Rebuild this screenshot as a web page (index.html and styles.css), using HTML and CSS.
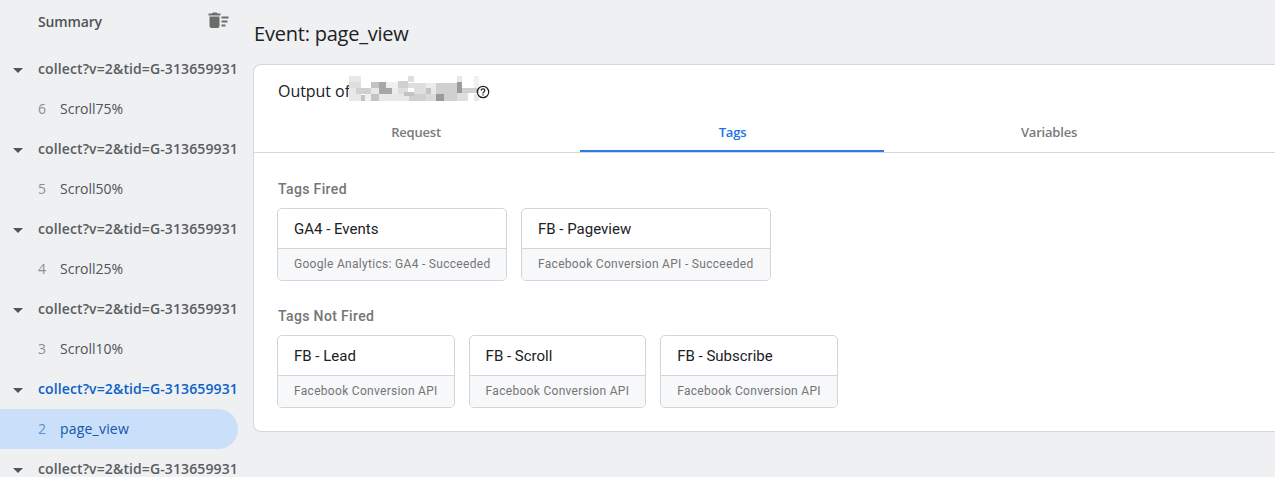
FILE: index.html
```html
<!DOCTYPE html>
<html lang="en">
<head>
<meta charset="utf-8">
<title>Event: page_view</title>
<link rel="stylesheet" href="styles.css">
</head>
<body>
<div class="app">
<nav class="sidebar">
<div class="summary"><span class="t-summary">Summary</span>
<svg class="trash" width="21" height="18" viewBox="0 0 21 18"><path fill="#6a6d6c" d="M1.500 4.500h10V14q0 2-2 2h-6q-2 0-2-2zM.5 1.500H4L5 .5h3.500l1 1h3v2H.5zM13.500 4.500h7v2h-7zM13.500 8.500h6v2h-6zM13.500 12.500h4v2h-4z"/></svg></div>
<div class="group"><i class="caret"></i><span class="req">collect?v=2&amp;tid=G-313659931</span></div>
<div class="event"><span class="num">6</span><span class="name">Scroll75%</span></div>
<div class="group"><i class="caret"></i><span class="req">collect?v=2&amp;tid=G-313659931</span></div>
<div class="event"><span class="num">5</span><span class="name">Scroll50%</span></div>
<div class="group"><i class="caret"></i><span class="req">collect?v=2&amp;tid=G-313659931</span></div>
<div class="event"><span class="num">4</span><span class="name">Scroll25%</span></div>
<div class="group"><i class="caret"></i><span class="req">collect?v=2&amp;tid=G-313659931</span></div>
<div class="event"><span class="num">3</span><span class="name">Scroll10%</span></div>
<div class="group current"><i class="caret"></i><span class="req">collect?v=2&amp;tid=G-313659931</span></div>
<div class="event selected"><span class="num">2</span><span class="name view">page_view</span></div>
<div class="group"><i class="caret"></i><span class="req">collect?v=2&amp;tid=G-313659931</span></div>
</nav>
<main class="main">
<h1 class="title">Event: page_view</h1>
<section class="panel">
<div class="output"><span class="t-output">Output of</span>
<svg class="mosaic" width="130" height="25" viewBox="27 18 390 75" shape-rendering="crispEdges">
<path fill="#e8e8e8" d="M27 18h36v18H27zM27 54h21v18H27zM27 72h36v21H27zM75 54h42v18H75zM117 72h90v21h-90zM273 54h15v18h-15zM351 18h15v18h-15zM402 72h15v21h-15z"/>
<path fill="#dedede" d="M27 36h36v18H27zM204 18h18v18h-18zM204 39h53v15h-53zM174 54h30v18h-30zM222 54h36v18h-36zM351 69h33v24h-33z"/>
<path fill="#d0d0d0" d="M48 54h45v18H48zM174 34h30v20h-30zM207 72h50v21h-50zM288 39h63v33h-63zM312 72h39v21h-39zM366 54h51v15h-51z"/>
<path fill="#c3c3c3" d="M93 36h24v18H93zM63 75h12v18H63zM93 72h24v21H93zM192 66h30v12h-30zM258 54h15v18h-15z"/>
<path fill="#a7a7a7" d="M117 36h21v18h18v18h-39z"/>
<path fill="#f0f0f0" d="M138 36h36v18h-18v18h-18zM75 72h18v21H75zM402 18h15v36h-15z"/>
<path fill="#a7a7a7" d="M117 54h38v18h-38z"/>
<path fill="#dadada" d="M257 72h31v21h-31z"/>
<path fill="#ececec" d="M257 39h31v15h-31zM156 54h18v18h-18z"/>
<path fill="#9a9a9a" d="M351 36h15v33h-15zM288 72h24v21h-24z"/>
</svg>
<svg class="help" width="14" height="14" viewBox="0 0 14 14" fill="none" stroke="#202124"><circle cx="7" cy="7" r="5.700" stroke-width="1.200"/><path stroke-width="1.200" d="M5.100 5.700Q5.100 3.900 7 3.900T8.900 5.500C8.900 6.700 7 6.800 7 8.400M7 9.300v1.200"/></svg></div>
<div class="tabs"><div class="tab"><span>Request</span></div><div class="tab active"><span>Tags</span></div><div class="tab"><span>Variables</span></div></div>
<div class="content">
<h2 class="label">Tags Fired</h2>
<div class="cards">
<div class="card w230"><div class="head">GA4 - Events</div><div class="foot">Google Analytics: GA4 - Succeeded</div></div>
<div class="card w250"><div class="head">FB - Pageview</div><div class="foot">Facebook Conversion API - Succeeded</div></div>
</div>
<h2 class="label second">Tags Not Fired</h2>
<div class="cards">
<div class="card"><div class="head">FB - Lead</div><div class="foot">Facebook Conversion API</div></div>
<div class="card"><div class="head">FB - Scroll</div><div class="foot">Facebook Conversion API</div></div>
<div class="card"><div class="head">FB - Subscribe</div><div class="foot">Facebook Conversion API</div></div>
</div>
</div>
</section>
</main>
</div>
</body>
</html>
```
FILE: styles.css
```css
* { box-sizing: border-box; }
body { margin: 0; font-family: "Open Sans", sans-serif; background: #eff0f2; }
.app { display: flex; height: 477px; overflow: hidden; }
.sidebar { width: 253px; flex: none; font-size: 14px; color: #505357; }
.summary { height: 49px; padding: 0 24px 7px 38px; display: flex; align-items: center; justify-content: space-between; font-weight: 600; letter-spacing: -.15px; }
.group, .event { height: 40px; padding-bottom: 1px; display: flex; align-items: center; white-space: nowrap; }
.group { padding-left: 13px; font-weight: 600; color: #5a5d61; }
.req { letter-spacing: .11px; }
.caret { border: 5px solid transparent; border-top-color: #505357; border-bottom: 0; margin: 3px 15px 0 0; }
.event { width: 238px; padding-left: 38px; }
.num { width: 22px; color: #8b8e91; }
.view { letter-spacing: .2px; }
.current .req { color: #0b62c9; }
.selected { background: #cadffa; border-radius: 0 20px 20px 0; color: #1556a8; }
.selected .num { color: #5d91d3; }
.main { flex: 1; min-width: 0; }
.title { margin: 0; height: 64px; font-weight: 400; font-size: 20px; line-height: 68px; padding-left: 1px; color: #202124; letter-spacing: -.22px; }
.panel { height: 368px; background: #fff; border: 1px solid #d5d8dd; border-right: 0; border-radius: 8px 0 0 8px; }
.output { height: 50px; padding: 2px 24px 0; display: flex; align-items: center; font-size: 16px; color: #202124; }
.t-output { width: 71px; flex: none; white-space: nowrap; letter-spacing: -.05px; }
.mosaic { flex: none; margin-top: -5px; }
.help { flex: none; margin: 2px 0 0 -3px; }
.tabs { height: 38px; display: flex; padding-left: 4px; border-bottom: 1px solid #d5d8dd; }
.tab { width: 316px; margin-right: .5px; text-align: center; font-size: 13px; line-height: 35px; color: #7a7a7a; font-weight: 600; letter-spacing: -.2px; }
.active { color: #1a73e8; background: linear-gradient(#2b7de9, #2b7de9) 5px bottom / 304px 2px no-repeat; }
.content { padding: 27px 23px; font-family: Roboto, sans-serif; }
.label { margin: 0 0 9px 1px; font-size: 14px; line-height: 19px; font-weight: 500; color: #757575; letter-spacing: .36px; }
.second { margin-top: 26px; }
.cards { display: flex; gap: 14px; }
.card { width: 177.600px; height: 73px; border: 1px solid #d2d5dc; border-radius: 5px; overflow: hidden; white-space: nowrap; }
.w230 { width: 230px; }
.w250 { width: 250px; }
.head { height: 39px; padding-left: 16px; line-height: 40px; font-size: 15px; color: #202124; }
.foot { height: 33px; padding-left: 16px; line-height: 31px; font-size: 12px; letter-spacing: .3px; color: #757575; background: #f7f8fa; border-top: 1px solid #d2d5dc; }
```
